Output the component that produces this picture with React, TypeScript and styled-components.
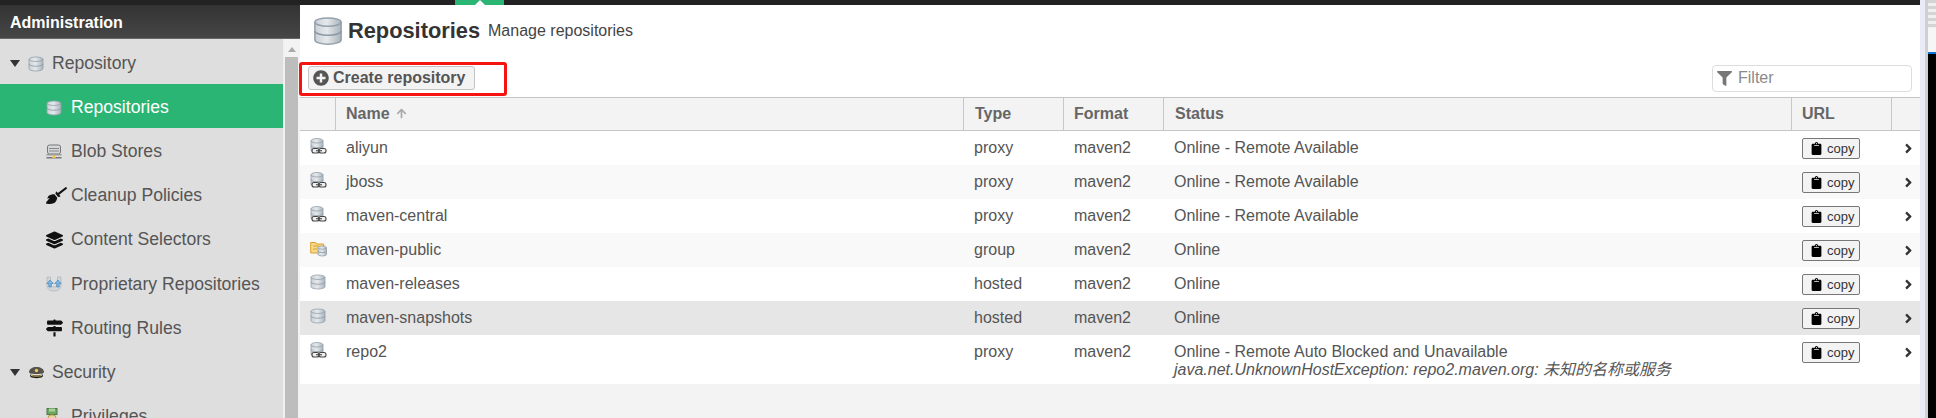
import { useId } from "react";
import styled, { createGlobalStyle } from "styled-components";
import {
  FaAngleRight,
  FaArrowUp,
  FaBroom,
  FaClipboard,
  FaFilter,
  FaLayerGroup,
  FaMapSigns,
  FaPlusCircle,
} from "react-icons/fa";

const GlobalStyle = createGlobalStyle`
  html, body {
    margin: 0;
    padding: 0;
    background: #fff;
  }
  * {
    box-sizing: border-box;
  }
  body {
    font-family: "Liberation Sans", Arial, "Noto Sans CJK SC", sans-serif;
    color: #555;
  }
`;

type Repo = {
  name: string;
  type: string;
  status: string;
  error?: string;
  selected?: boolean;
};

const repos: Repo[] = [
  { name: "aliyun", type: "proxy", status: "Online - Remote Available" },
  { name: "jboss", type: "proxy", status: "Online - Remote Available" },
  { name: "maven-central", type: "proxy", status: "Online - Remote Available" },
  { name: "maven-public", type: "group", status: "Online" },
  { name: "maven-releases", type: "hosted", status: "Online" },
  { name: "maven-snapshots", type: "hosted", status: "Online", selected: true },
  {
    name: "repo2",
    type: "proxy",
    status: "Online - Remote Auto Blocked and Unavailable",
    error: "java.net.UnknownHostException: repo2.maven.org: 未知的名称或服务",
  },
];

function Cylinder({ x = 1, y = 1, w = 14, h = 14 }: { x?: number; y?: number; w?: number; h?: number }) {
  const id = useId();
  const ry = h * 0.16;
  const seg = (h - ry * 2) / 2;
  return (
    <g>
      <defs>
        <linearGradient id={id} x1="0" y1="0" x2="1" y2="0">
          <stop offset="0" stopColor="#c9d0d6" />
          <stop offset="0.45" stopColor="#e6e9eb" />
          <stop offset="1" stopColor="#a9b4bd" />
        </linearGradient>
      </defs>
      <path
        d={`M${x} ${y + ry}a${w / 2} ${ry} 0 0 1 ${w} 0v${seg * 2}a${w / 2} ${ry} 0 0 1 ${-w} 0z`}
        fill={`url(#${id})`}
        stroke="#93a0ab"
        strokeWidth="0.8"
      />
      <path
        d={`M${x} ${y + ry}a${w / 2} ${ry} 0 0 0 ${w} 0`}
        fill="none"
        stroke="#93a0ab"
        strokeWidth="0.8"
      />
      <path
        d={`M${x} ${y + ry + seg}a${w / 2} ${ry} 0 0 0 ${w} 0`}
        fill="none"
        stroke="#8b98a3"
        strokeWidth="0.8"
      />
    </g>
  );
}

function DbIcon({ size = 16 }: { size?: number }) {
  return (
    <svg width={size} height={size} viewBox="0 0 16 16">
      <Cylinder />
    </svg>
  );
}

function ProxyIcon() {
  return (
    <svg width="17" height="17" viewBox="0 0 17 17">
      <Cylinder x={1} y={0.5} w={12} h={14} />
      <rect x="2" y="10.500" width="7" height="4.500" rx="2" fill="#eef0f1" stroke="#444" strokeWidth="1.100" />
      <rect x="9" y="10.500" width="7" height="4.500" rx="2" fill="#eef0f1" stroke="#444" strokeWidth="1.100" />
      <path d="M6 12.750h6" stroke="#444" strokeWidth="1.100" />
    </svg>
  );
}

function GroupIcon() {
  return (
    <svg width="17" height="17" viewBox="0 0 17 17">
      <path d="M.7 2.500h5l1 1.500h7v9H.7z" fill="#f8d98a" stroke="#d9a02e" />
      <path d="M3 6h6M3 9h4" stroke="#d9a02e" />
      <Cylinder x={8} y={6} w={8.500} h={10} />
    </svg>
  );
}

function BlobIcon() {
  return (
    <svg width="16" height="16" viewBox="0 0 16 16">
      <rect x="1.500" y="1" width="13" height="9" rx="2" fill="#d5d8da" stroke="#777" />
      <path d="M3 4.500h10M3 7h10" stroke="#888" />
      <rect x="0.500" y="10" width="15" height="1.500" fill="#9b9b9b" />
      <rect x="0.500" y="13" width="15" height="1.500" fill="#777" />
      <path d="M8 10.500l2 3.500H6z" fill="#f0c040" />
    </svg>
  );
}

function ProprietaryIcon() {
  return (
    <svg width="16" height="16" viewBox="0 0 16 16">
      <path d="M1 1h3.500v7c0 2 1.500 3 3.500 3s3.500-1 3.500-3V1H15v8c0 4-3 6-7 6s-7-2-7-6z" fill="#d3d6d8" stroke="#a8acaf" strokeWidth="0.600" />
      <path d="M4 4L.8 7.500h2V11h2.500V7.500h2zM12 4L8.700 7.500h2V11h2.500V7.500h2z" fill="#7db8e4" stroke="#3a7fb5" strokeWidth="0.600" />
    </svg>
  );
}

function HatIcon() {
  return (
    <svg width="17" height="13" viewBox="0 0 17 13">
      <path d="M1 6c0-3 3.500-5 7.500-5S16 3 16 6c0 1-1 2-7.500 2S1 7 1 6z" fill="#55524c" />
      <circle cx="8.500" cy="4.500" r="1.700" fill="#e8c860" />
      <path d="M2 8.500c3 1 10 1 13 0l-.5 2.500c-3 1.500-9 1.500-12 0z" fill="#1d1c1a" />
      <path d="M3 9.500c3 .8 8 .8 11 0" stroke="#e0c15a" fill="none" />
    </svg>
  );
}

function MedalIcon() {
  return (
    <svg width="12" height="16" viewBox="0 0 12 16">
      <rect x="1" y="0.500" width="10" height="6" fill="#6ea860" stroke="#4b7a42" />
      <path d="M3 .5h6v3H3z" fill="#a9d09a" />
      <rect x="2" y="7" width="8" height="8.500" rx="3" fill="#e6d29a" stroke="#b89d57" />
    </svg>
  );
}

const Page = styled.div`
  display: flex;
  width: 1936px;
  height: 418px;
  overflow: hidden;
`;

const Shell = styled.div`
  display: flex;
  flex-direction: column;
  flex: none;
  width: 1920px;
`;

const TopBar = styled.div`
  display: flex;
  height: 5px;
  flex: none;
  padding-left: 455px;
  background: #222;
`;

const ActiveTab = styled.div`
  display: flex;
  justify-content: center;
  width: 49px;
  background: #2ab574;

  &::after {
    content: "";
    border-left: 5px solid transparent;
    border-right: 5px solid transparent;
    border-bottom: 5px solid #fff;
  }
`;

const Body = styled.div`
  display: flex;
  flex: 1;
  min-height: 0;
`;

const Sidebar = styled.aside`
  display: flex;
  flex-direction: column;
  flex: none;
  width: 300px;
`;

const SideTitle = styled.div`
  display: flex;
  align-items: center;
  flex: none;
  height: 34px;
  padding: 2px 0 0 10px;
  background: linear-gradient(#333, #464646);
  border-bottom: 1px solid #666;
  color: #fff;
  font-size: 16px;
  font-weight: 700;
`;

const SideBody = styled.div`
  display: flex;
  flex: 1;
  min-height: 0;
`;

const Nav = styled.nav`
  flex: none;
  width: 283px;
  padding-top: 1px;
  overflow: hidden;
  background: #dedede;
`;

const NavItem = styled.div<{ $child?: boolean; $active?: boolean }>`
  display: flex;
  align-items: center;
  height: 44.100px;
  padding: 3px 0 0 ${(p) => (p.$child ? "46px" : "10px")};
  background: ${(p) => (p.$active ? "#2ab574" : "transparent")};
  color: ${(p) => (p.$active ? "#fff" : "#555")};
  font-size: 17.600px;
  white-space: nowrap;
`;

const Caret = styled.span`
  flex: none;
  width: 0;
  height: 0;
  margin-right: 8px;
  border-left: 5px solid transparent;
  border-right: 5px solid transparent;
  border-top: 7px solid #333;
`;

const NavIcon = styled.span<{ $child?: boolean }>`
  display: flex;
  align-items: center;
  justify-content: flex-start;
  flex: none;
  width: 17px;
  height: 17px;
  margin-right: ${(p) => (p.$child ? "8px" : "7px")};
  color: #111;
  font-size: 18px;
`;

const ScrollTrack = styled.div`
  display: flex;
  flex-direction: column;
  align-items: flex-start;
  flex: none;
  width: 17px;
  padding-left: 2px;
  background: linear-gradient(90deg, #f0f0f0, #f0f0f0 2px, #f3f3f3 2px);
`;

const ScrollArrow = styled.span`
  width: 0;
  height: 0;
  margin: 8px 0 5px 2.500px;
  border-left: 4px solid transparent;
  border-right: 4px solid transparent;
  border-bottom: 5px solid #aaa;
`;

const ScrollThumb = styled.div`
  flex: 1;
  width: 13px;
  background: #bdbdbd;
`;

const Main = styled.main`
  display: flex;
  flex-direction: column;
  flex: 1;
  min-width: 0;
  background: #f3f3f3;
`;

const PageHead = styled.header`
  display: flex;
  align-items: center;
  flex: none;
  height: 57px;
  padding: 0 0 6px 13px;
  background: #fff;
`;

const Title = styled.h1`
  margin: 0 0 0 5px;
  color: #333;
  font-size: 21.800px;
  font-weight: 700;
`;

const Subtitle = styled.span`
  margin-left: 8px;
  color: #444;
  font-size: 16px;
`;

const Toolbar = styled.div`
  position: relative;
  display: flex;
  align-items: center;
  justify-content: space-between;
  flex: none;
  height: 35px;
  padding: 0 8px 3px;
  background: #fff;
`;

const CreateButton = styled.button`
  display: flex;
  align-items: center;
  gap: 4px;
  width: 167px;
  height: 24px;
  padding: 0 0 0 4px;
  border: 1px solid #c4c4c4;
  border-radius: 3px;
  background: #f3f3f3;
  color: #555;
  font: 700 16px "Liberation Sans", Arial, sans-serif;
  white-space: nowrap;

  svg {
    flex: none;
    font-size: 16px;
  }
`;

const Annotation = styled.div`
  position: absolute;
  top: 0;
  left: -1px;
  width: 208px;
  height: 34px;
  border: 3px solid #f5140f;
  border-radius: 3px;
  pointer-events: none;
`;

const FilterBox = styled.label`
  display: flex;
  align-items: center;
  gap: 6px;
  width: 200px;
  height: 27px;
  padding-left: 4px;
  border: 1px solid #ddd;
  border-radius: 4px;
  background: #fff;
  color: #777;
  font-size: 15px;
`;

const FilterInput = styled.input`
  flex: 1;
  min-width: 0;
  padding: 0;
  border: 0;
  outline: 0;
  font: 16px "Liberation Sans", Arial, sans-serif;

  &::placeholder {
    color: #8a8a8a;
    opacity: 1;
  }
`;

const columns = "35px 628px 100px 100px 628px 100px 29px";

const HeadRow = styled.div`
  display: grid;
  grid-template-columns: ${columns};
  flex: none;
  height: 34px;
  border-top: 1px solid #c4c4c4;
  border-bottom: 1px solid #c4c4c4;
  background: #f3f3f3;
`;

const HeadCell = styled.div`
  display: flex;
  align-items: center;
  gap: 6px;
  padding: 0 0 1px 10px;
  border-left: 1px solid #c8c8c8;
  color: #666;
  font-size: 16px;
  font-weight: 700;

  &:first-child {
    border-left: 0;
  }

  &:nth-child(3),
  &:nth-child(5) {
    padding-left: 11px;
  }

  svg {
    color: #aaa;
    font-size: 11px;
  }
`;

const Row = styled.div<{ $striped: boolean; $selected?: boolean }>`
  display: grid;
  grid-template-columns: ${columns};
  flex: none;
  min-height: 34px;
  background: ${(p) => (p.$selected ? "#e6e6e6" : p.$striped ? "#f9f9f9" : "#fff")};
`;

const Cell = styled.div`
  min-width: 0;
  padding: 8px 0 5px 11px;
  color: #555;
  font-size: 16px;
  line-height: 18px;
  white-space: nowrap;
`;

const IconCell = styled.div`
  padding: 7px 0 0 10px;
`;

const ErrorText = styled.div`
  font-family: "Liberation Sans", Arial, "Noto Sans CJK SC", sans-serif;
  font-style: italic;
`;

const CopyButton = styled.button`
  display: flex;
  align-items: center;
  gap: 4px;
  width: 58px;
  height: 21px;
  margin-top: -1px;
  padding: 0 0 0 7px;
  border: 1px solid #777;
  border-radius: 2px;
  background: #f3f3f3;
  color: #333;
  font: 13px "Liberation Sans", Arial, sans-serif;

  svg {
    flex: none;
    color: #000;
    font-size: 13px;
  }
`;

const ChevronCell = styled.div`
  padding: 10px 0 0 10px;
  color: #333;
  font-size: 15px;
  line-height: 1;
`;

const Edge = styled.div`
  display: flex;
  flex: none;
  width: 16px;
  background: #eceef8;
`;

const EdgeGutter = styled.div`
  flex: none;
  width: 8px;
  background: linear-gradient(90deg, #e9ebf6, #e9ebf6 5px, #cfcfcf 5px);
`;

const EdgeWindow = styled.div`
  display: flex;
  flex-direction: column;
  flex: none;
  width: 8px;
  background: #000;
`;

const EdgeTabs = styled.div`
  height: 28px;
  background: repeating-linear-gradient(#d4d4d4, #d4d4d4 3px, #f0f0f0 3px, #f0f0f0 6px);
`;

const EdgeBlank = styled.div`
  height: 24px;
  background: #f6f6f6;
`;

const EdgeLine = styled.div`
  height: 2px;
  background: #0a78d4;
`;

function repoIcon(type: string) {
  if (type === "proxy") return <ProxyIcon />;
  if (type === "group") return <GroupIcon />;
  return <DbIcon />;
}

export default function App() {
  return (
    <>
      <GlobalStyle />
      <Page>
        <Shell>
          <TopBar>
            <ActiveTab />
          </TopBar>
          <Body>
            <Sidebar>
              <SideTitle>Administration</SideTitle>
              <SideBody>
                <Nav>
                  <NavItem>
                    <Caret />
                    <NavIcon><DbIcon /></NavIcon>
                    Repository
                  </NavItem>
                  <NavItem $child $active>
                    <NavIcon $child><DbIcon /></NavIcon>
                    Repositories
                  </NavItem>
                  <NavItem $child>
                    <NavIcon $child><BlobIcon /></NavIcon>
                    Blob Stores
                  </NavItem>
                  <NavItem $child>
                    <NavIcon $child><FaBroom size={21} style={{ flex: "none" }} /></NavIcon>
                    Cleanup Policies
                  </NavItem>
                  <NavItem $child>
                    <NavIcon $child><FaLayerGroup /></NavIcon>
                    Content Selectors
                  </NavItem>
                  <NavItem $child>
                    <NavIcon $child><ProprietaryIcon /></NavIcon>
                    Proprietary Repositories
                  </NavItem>
                  <NavItem $child>
                    <NavIcon $child><FaMapSigns /></NavIcon>
                    Routing Rules
                  </NavItem>
                  <NavItem>
                    <Caret />
                    <NavIcon><HatIcon /></NavIcon>
                    Security
                  </NavItem>
                  <NavItem $child>
                    <NavIcon $child><MedalIcon /></NavIcon>
                    Privileges
                  </NavItem>
                </Nav>
                <ScrollTrack>
                  <ScrollArrow />
                  <ScrollThumb />
                </ScrollTrack>
              </SideBody>
            </Sidebar>
            <Main>
              <PageHead>
                <DbIcon size={30} />
                <Title>Repositories</Title>
                <Subtitle>Manage repositories</Subtitle>
              </PageHead>
              <Toolbar>
                <CreateButton>
                  <FaPlusCircle />
                  Create repository
                </CreateButton>
                <FilterBox>
                  <FaFilter />
                  <FilterInput placeholder="Filter" />
                </FilterBox>
                <Annotation />
              </Toolbar>
              <HeadRow>
                <HeadCell />
                <HeadCell>
                  Name
                  <FaArrowUp />
                </HeadCell>
                <HeadCell>Type</HeadCell>
                <HeadCell>Format</HeadCell>
                <HeadCell>Status</HeadCell>
                <HeadCell>URL</HeadCell>
                <HeadCell />
              </HeadRow>
              {repos.map((repo, i) => (
                <Row key={repo.name} $striped={i % 2 === 1} $selected={repo.selected}>
                  <IconCell>{repoIcon(repo.type)}</IconCell>
                  <Cell>{repo.name}</Cell>
                  <Cell>{repo.type}</Cell>
                  <Cell>maven2</Cell>
                  <Cell>
                    {repo.status}
                    {repo.error && <ErrorText>{repo.error}</ErrorText>}
                  </Cell>
                  <Cell>
                    <CopyButton>
                      <FaClipboard />
                      copy
                    </CopyButton>
                  </Cell>
                  <ChevronCell>
                    <FaAngleRight />
                  </ChevronCell>
                </Row>
              ))}
            </Main>
          </Body>
        </Shell>
        <Edge>
          <EdgeGutter />
          <EdgeWindow>
            <EdgeTabs />
            <EdgeBlank />
            <EdgeLine />
          </EdgeWindow>
        </Edge>
      </Page>
    </>
  );
}
